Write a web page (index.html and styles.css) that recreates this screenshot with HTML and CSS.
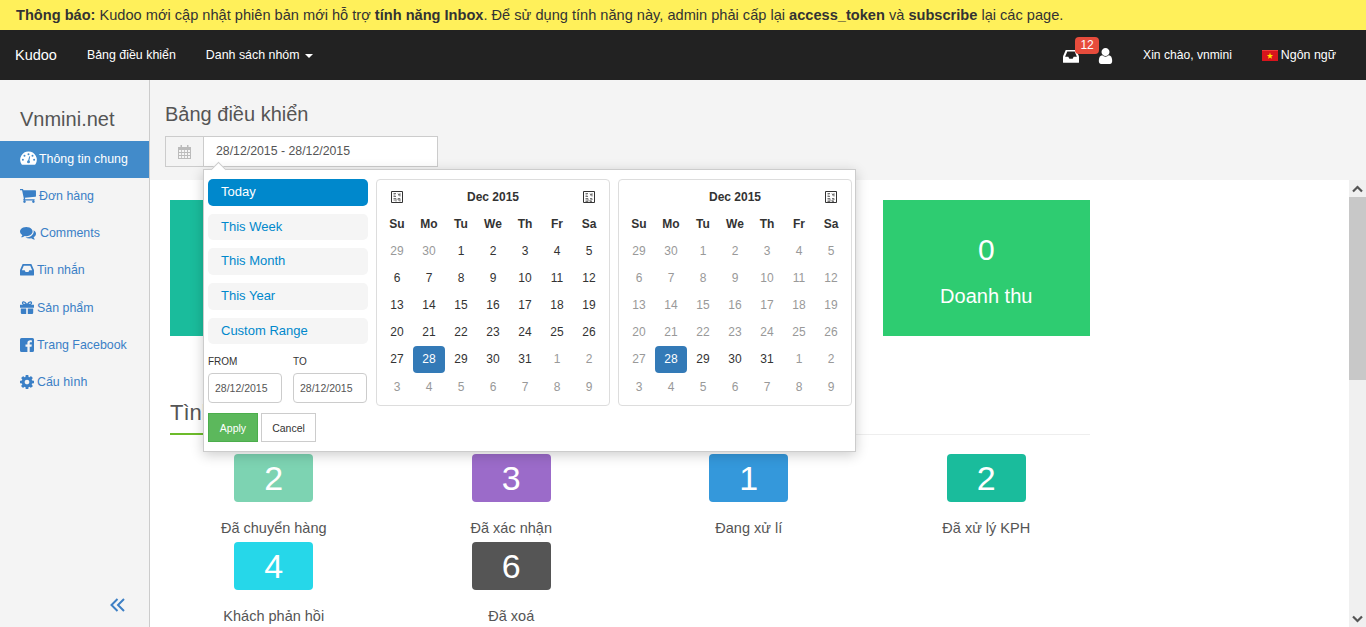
FILE: index.html
```html
<!DOCTYPE html>
<html lang="vi">
<head>
<meta charset="utf-8">
<title>Kudoo</title>
<link rel="stylesheet" href="styles.css">
</head>
<body>
<div class="notice"><b>Thông báo:</b> Kudoo mới cập nhật phiên bản mới hỗ trợ <b>tính năng Inbox</b>. Để sử dụng tính năng này, admin phải cấp lại <b>access_token</b> và <b>subscribe</b> lại các page.</div>
<nav class="nav">
  <a class="brand">Kudoo</a>
  <a class="nav-link">Bảng điều khiển</a>
  <a class="nav-link">Danh sách nhóm <i class="caret"></i></a>
  <div class="nav-right">
    <span class="nav-icons">
      <svg class="ic-inbox" viewBox="0 320 1536 1216"><path fill="#fff" d="M1023 960h316q-1-3-2.500-8.500t-2.500-7.500l-212-496h-708l-212 496q-1 3-2.500 8.500t-2.500 7.500h316l95 192h320zm513 30v482q0 26-19 45t-45 19h-1408q-26 0-45-19t-19-45v-482q0-62 25-123l238-552q10-25 36.500-42t52.500-17h832q26 0 52.500 17t36.500 42l238 552q25 61 25 123z"/></svg>
      <span class="badge">12</span>
      <svg class="ic-user" viewBox="256 128 1280 1536"><path fill="#fff" d="M1536 1399q0 109-62.500 187t-150.500 78h-854q-88 0-150.500-78t-62.500-187q0-85 8.500-160.500t31.500-152 58.500-131 94-89 134.500-34.500q131 128 313 128t313-128q76 0 134.500 34.500t94 89 58.500 131 31.500 152 8.500 160.500zm-256-887q0 159-112.500 271.500t-271.500 112.500-271.500-112.500-112.500-271.500 112.500-271.500 271.500-112.500 271.500 112.500 112.500 271.500z"/></svg>
    </span>
    <a class="nav-link hello">Xin chào, vnmini</a>
    <a class="nav-link lang">
      <svg class="flag" viewBox="0 0 16 11"><rect width="16" height="11" fill="#d8141c"/><rect width="16" height="1" fill="#ee3a3a"/><polygon fill="#ffe200" points="8,2.600 8.800,5 11.200,5 9.300,6.400 10,8.800 8,7.400 6,8.800 6.700,6.400 4.800,5 7.200,5"/></svg>
      Ngôn ngữ
    </a>
  </div>
</nav>
<div class="layout">
  <aside class="sidebar">
    <h2 class="site">Vnmini.net</h2>
    <ul class="menu">
      <li class="active"><svg class="mi mi-dial" width="17" height="15" viewBox="0 0 17 15"><path fill="#fff" d="M8.500 0.500a8.300 8.300 0 0 0-7 12.700 1 1 0 0 0 .8.500h12.400a1 1 0 0 0 .8-.5 8.300 8.300 0 0 0-7-12.700z"/><g fill="#428bca"><circle cx="8.500" cy="3.200" r="1"/><circle cx="4.500" cy="4.800" r="1"/><circle cx="12.500" cy="4.800" r="1"/><circle cx="2.900" cy="8.700" r="1"/><circle cx="14.100" cy="8.700" r="1"/><circle cx="8.500" cy="10.800" r="1.500"/><path d="M7.900 10.500 9.300 5.200l.9.200-1.100 5.400z"/></g></svg>Thông tin chung</li>
      <li><svg class="mi" width="16" height="14" viewBox="128 256 1600 1408"><path d="M704 1536q0 52-38 90t-90 38-90-38-38-90 38-90 90-38 90 38 38 90zm896 0q0 52-38 90t-90 38-90-38-38-90 38-90 90-38 90 38 38 90zm128-1088v512q0 24-16.500 42.500t-40.500 21.500l-1044 122q13 60 13 70 0 16-24 64h920q26 0 45 19t19 45-19 45-45 19h-1024q-26 0-45-19t-19-45q0-11 8-31.500t16-36 21.500-40 15.500-29.500l-177-823h-204q-26 0-45-19t-19-45 19-45 45-19h256q16 0 28.500 6.500t19.500 15.500 13 24.500 8 26 5.500 29.500 4.500 26h1201q26 0 45 19t19 45z"/></svg>Đơn hàng</li>
      <li><svg class="mi mi-wide" width="16" height="14" viewBox="0 192 1792 1472"><path d="M1408 768q0 139-94 257t-256.500 186.500-353.500 68.500q-86 0-176-16-124 88-278 128-36 9-86 16h-3q-11 0-20.500-8t-11.500-21q-1-3-1-6.500t.5-6.500 2-6l2.500-5 3.500-5.500 4-5 4.500-5 4-4.500q5-6 23-25t26-29.500 22.500-29 25-38.500 20.500-44q-124-72-195-177t-71-224q0-139 94-257t256.500-186.500 353.500-68.500 353.500 68.500 256.500 186.500 94 257zm384 256q0 120-71 224.500t-195 176.500q10 24 20.500 44t25 38.500 22.500 29 26 29.500 23 25q1 1 4 4.500t4.500 5 4 5 3.500 5.500l2.500 5 2 6 .5 6.500-1 6.500q-3 14-13 22t-22 7q-50-7-86-16-154-40-278-128-90 16-176 16-271 0-472-132 58 4 88 4 161 0 309-45t264-129q125-92 192-212t67-254q0-77-23-152 129 71 204 178t75 230z"/></svg>Comments</li>
      <li><svg class="mi mi-narrow" width="14" height="12" viewBox="0 320 1536 1216"><path d="M1023 960h316q-1-3-2.500-8.500t-2.500-7.500l-212-496h-708l-212 496q-1 3-2.500 8.500t-2.500 7.500h316l95 192h320zm513 30v482q0 26-19 45t-45 19h-1408q-26 0-45-19t-19-45v-482q0-62 25-123l238-552q10-25 36.500-42t52.500-17h832q26 0 52.500 17t36.500 42l238 552q25 61 25 123z"/></svg>Tin nhắn</li>
      <li><svg class="mi mi-narrow" width="14" height="13" viewBox="0 0 14 13"><path d="M0 3.800h14v3H0zM.8 7.500h5.400V13H2a1.200 1.200 0 0 1-1.200-1.200zM7.800 7.500h5.400v4.300A1.200 1.200 0 0 1 12 13H7.800z"/><path fill="none" stroke="currentColor" stroke-width="1.300" d="M6.600 3.400C5.600 1.400 4.300.7 3.300.9 2.200 1.100 2.200 3 3.500 3.400zM7.400 3.400C8.400 1.400 9.700.7 10.700.9c1.100.2 1.100 2.100-.2 2.500z"/></svg>Sản phẩm</li>
      <li><svg class="mi mi-narrow" width="14" height="14" viewBox="0 0 14 14"><path d="M1.500 0h11A1.500 1.500 0 0 1 14 1.500v11a1.500 1.500 0 0 1-1.500 1.500H9.700V8.700h1.800l.3-2.100H9.700V5.300c0-.6.200-1 1-1h1.200V2.400c-.2 0-.9-.1-1.700-.1-1.700 0-2.800 1-2.800 2.800v1.500H5.500v2.100h1.900V14H1.500A1.500 1.500 0 0 1 0 12.500v-11A1.500 1.500 0 0 1 1.500 0z"/></svg>Trang Facebook</li>
      <li><svg class="mi mi-narrow" width="14" height="14" viewBox="128 128 1536 1536"><path d="M1152 896q0-106-75-181t-181-75-181 75-75 181 75 181 181 75 181-75 75-181zm512-109v222q0 12-8 23t-20 13l-185 28q-19 54-39 91 35 50 107 138 10 12 10 25t-9 23q-27 37-99 108t-94 71q-12 0-26-9l-138-108q-44 23-91 38-16 136-29 186-7 28-36 28h-222q-14 0-24.500-8.500t-11.500-21.500l-28-184q-49-16-90-37l-141 107q-10 9-25 9-14 0-25-11-126-114-165-168-7-10-7-23 0-12 8-23 15-21 51-66.500t54-70.500q-27-50-41-99l-183-27q-13-2-21-12.500t-8-23.500v-222q0-12 8-23t19-13l186-28q14-46 39-92-40-57-107-138-10-12-10-24 0-10 9-23 26-36 98.500-107.500t94.500-71.500q13 0 26 10l138 107q44-23 91-38 16-136 29-186 7-28 36-28h222q14 0 24.500 8.500t11.500 21.500l28 184q49 16 90 37l142-107q9-9 24-9 13 0 25 10 129 119 165 170 7 8 7 22 0 12-8 23-15 21-51 66.500t-54 70.500q26 50 41 98l183 28q13 2 21 12.500t8 23.500z"/></svg>Cấu hình</li>
    </ul>
    <div class="collapse"><svg width="16" height="14" viewBox="0 0 16 14"><path fill="none" stroke="#3d7fc4" stroke-width="2" d="M7.500 1 1.500 7l6 6M14 1 8 7l6 6"/></svg></div>
  </aside>
  <main class="main">
    <header class="page-head">
      <h1 class="page-title">Bảng điều khiển</h1>
      <div class="range">
        <span class="range-icon"><svg width="13" height="14" viewBox="0 0 13 14"><path fill="#bbb" d="M0 2h13v12H0z"/><path fill="#f4f4f4" d="M1 5h2.200v2H1zM4 5h2.200v2H4zM7 5h2v2H7zM10 5h2v2h-2zM1 8h2.200v2H1zM4 8h2.200v2H4zM7 8h2v2H7zM10 8h2v2h-2zM1 11h2.200v2H1zM4 11h2.200v2H4zM7 11h2v2H7zM10 11h2v2h-2z"/><path fill="#bbb" d="M2.500 0h1.500v3.500H2.500zM9 0h1.500v3.500H9z"/></svg></span>
        <span class="range-value">28/12/2015 - 28/12/2015</span>
        <div class="picker">
          <div class="ranges">
            <a class="rng on">Today</a>
            <a class="rng">This Week</a>
            <a class="rng">This Month</a>
            <a class="rng">This Year</a>
            <a class="rng">Custom Range</a>
            <div class="fields">
              <label class="field"><span>FROM</span><input class="fld" value="28/12/2015"></label>
              <label class="field"><span>TO</span><input class="fld" value="28/12/2015"></label>
            </div>
            <div class="btns"><button class="btn apply">Apply</button><button class="btn cancel">Cancel</button></div>
          </div>
          <div class="cal">
            <span class="nav-tofu"><svg width="12" height="12" viewBox="0 0 12 12"><path fill="none" stroke="#333" d="M.5.500h11v11H.5z"/><path fill="none" stroke="#777" d="M2.500 2.500h2.500M2.500 4h2M2.500 5.500h2.500M7 2.500l1 2 1-2v3M2.500 7.500h2.500v3M2.500 9h2M7 7.500h2v3M7 7.500v1.500h2"/></svg></span><span class="month">Dec 2015</span><span class="nav-tofu"><svg width="12" height="12" viewBox="0 0 12 12"><path fill="none" stroke="#333" d="M.5.500h11v11H.5z"/><path fill="none" stroke="#777" d="M2.500 2.500h2.500M2.500 4h2M2.500 5.500h2.500M7 2.500l1 2 1-2v3M2.500 7.500h2.500v3H2.500M2.500 9h2M7 7.500h2v1.500H7v1.500h2"/></svg></span>
            <b>Su</b><b>Mo</b><b>Tu</b><b>We</b><b>Th</b><b>Fr</b><b>Sa</b>
            <i class="off">29</i><i class="off">30</i><i>1</i><i>2</i><i>3</i><i>4</i><i>5</i>
            <i>6</i><i>7</i><i>8</i><i>9</i><i>10</i><i>11</i><i>12</i>
            <i>13</i><i>14</i><i>15</i><i>16</i><i>17</i><i>18</i><i>19</i>
            <i>20</i><i>21</i><i>22</i><i>23</i><i>24</i><i>25</i><i>26</i>
            <i>27</i><i class="sel">28</i><i>29</i><i>30</i><i>31</i><i class="off">1</i><i class="off">2</i>
            <i class="off">3</i><i class="off">4</i><i class="off">5</i><i class="off">6</i><i class="off">7</i><i class="off">8</i><i class="off">9</i>
          </div>
          <div class="cal">
            <span class="nav-blank"></span><span class="month">Dec 2015</span><span class="nav-tofu"><svg width="12" height="12" viewBox="0 0 12 12"><path fill="none" stroke="#333" d="M.5.500h11v11H.5z"/><path fill="none" stroke="#777" d="M2.500 2.500h2.500M2.500 4h2M2.500 5.500h2.500M7 2.500l1 2 1-2v3M2.500 7.500h2.500v3H2.500M2.500 9h2M7 7.500h2v1.500H7v1.500h2"/></svg></span>
            <b>Su</b><b>Mo</b><b>Tu</b><b>We</b><b>Th</b><b>Fr</b><b>Sa</b>
            <i class="off">29</i><i class="off">30</i><i class="off">1</i><i class="off">2</i><i class="off">3</i><i class="off">4</i><i class="off">5</i>
            <i class="off">6</i><i class="off">7</i><i class="off">8</i><i class="off">9</i><i class="off">10</i><i class="off">11</i><i class="off">12</i>
            <i class="off">13</i><i class="off">14</i><i class="off">15</i><i class="off">16</i><i class="off">17</i><i class="off">18</i><i class="off">19</i>
            <i class="off">20</i><i class="off">21</i><i class="off">22</i><i class="off">23</i><i class="off">24</i><i class="off">25</i><i class="off">26</i>
            <i class="off">27</i><i class="sel">28</i><i>29</i><i>30</i><i>31</i><i class="off">1</i><i class="off">2</i>
            <i class="off">3</i><i class="off">4</i><i class="off">5</i><i class="off">6</i><i class="off">7</i><i class="off">8</i><i class="off">9</i>
          </div>
        </div>
      </div>
    </header>
    <div class="body-wrap">
      <div class="content">
        <div class="stats">
          <div class="stat-col"><div class="stat teal"></div></div>
          <div class="stat-col"><div class="stat blue"></div></div>
          <div class="stat-col"><div class="stat purple"></div></div>
          <div class="stat-col"><div class="stat green"><strong>0</strong><span>Doanh thu</span></div></div>
        </div>
        <h3 class="section"><span>Tình</span></h3>
        <div class="tiles">
          <div class="tile-col"><div class="tile c1">2</div><p>Đã chuyển hàng</p></div>
          <div class="tile-col"><div class="tile c2">3</div><p>Đã xác nhận</p></div>
          <div class="tile-col"><div class="tile c3">1</div><p>Đang xử lí</p></div>
          <div class="tile-col"><div class="tile c4">2</div><p>Đã xử lý KPH</p></div>
          <div class="tile-col"><div class="tile c5">4</div><p>Khách phản hồi</p></div>
          <div class="tile-col"><div class="tile c6">6</div><p>Đã xoá</p></div>
        </div>
      </div>
      <div class="scrollbar">
        <span class="sb-btn"><svg width="11" height="8" viewBox="0 0 11 8"><path fill="none" stroke="#555" stroke-width="2.200" d="M1 6.500 5.500 2 10 6.500"/></svg></span>
        <span class="sb-thumb"></span>
        <span class="sb-track"></span>
        <span class="sb-btn"><svg width="11" height="8" viewBox="0 0 11 8"><path fill="none" stroke="#555" stroke-width="2.200" d="M1 1.500 5.500 6 10 1.500"/></svg></span>
      </div>
    </div>
  </main>
</div>
</body>
</html>
```
FILE: styles.css
```css
* { box-sizing: border-box; }
html, body { height: 100%; }
body {
  margin: 0;
  height: 627px;
  overflow: hidden;
  display: flex;
  flex-direction: column;
  font-family: "Liberation Sans", Arial, sans-serif;
  font-size: 14px;
  color: #333;
  background: #fff;
}
.notice {
  height: 30px;
  line-height: 30px;
  padding-left: 16px;
  background: #fff05a;
  color: #333;
  font-size: 14.600px;
  white-space: nowrap;
}
.nav {
  height: 50px;
  display: flex;
  align-items: center;
  background: #222;
  color: #fff;
  padding-left: 15px;
}
.brand { font-size: 14.500px; margin-right: 30px; }
.nav-link { font-size: 12.400px; margin-right: 30px; white-space: nowrap; }
.hello { font-size: 12.100px; }
.caret {
  display: inline-block;
  vertical-align: middle;
  margin-left: 2px;
  border-top: 4px solid #fff;
  border-left: 4px solid transparent;
  border-right: 4px solid transparent;
}
.nav-right { margin-left: auto; display: flex; align-items: center; }
.nav-icons { position: relative; display: flex; align-items: center; width: 80px; padding-top: 2px; }
.ic-inbox { width: 16px; height: 13px; }
.ic-user { width: 15px; height: 16px; margin-left: 19px; }
.badge {
  position: absolute;
  left: 12px;
  top: -9px;
  width: 24px;
  height: 17px;
  border-radius: 4px;
  background: #e74c3c;
  color: #fff;
  font-size: 12px;
  line-height: 17px;
  text-align: center;
}
.lang { display: flex; align-items: center; gap: 3px; }
.flag { width: 16px; height: 11px; }
.layout { flex: 1; display: flex; min-height: 0; }
.sidebar {
  width: 150px;
  position: relative;
  background: #f4f4f4;
  border-right: 1px solid #ccc;
  flex: none;
}
.site {
  margin: 27px 0 0;
  padding-left: 20px;
  height: 34px;
  line-height: 24px;
  font-size: 20px;
  font-weight: 400;
  color: #555;
}
.menu { list-style: none; margin: 0; padding: 0; }
.menu li {
  height: 37.200px;
  display: flex;
  align-items: center;
  padding: 0 0 1.400px 20px;
  font-size: 12.400px;
  color: #3a7fc6;
  white-space: nowrap;
}
.menu .active { background: #428bca; color: #fff; }
.mi { fill: currentColor; flex: none; margin-right: 3px; }
.mi-dial { margin-right: 2px; }
.mi-wide { margin-right: 4px; }
.collapse { position: absolute; left: 110px; top: 518px; line-height: 0; }
.main { flex: 1; min-width: 0; display: flex; flex-direction: column; }
.page-head { height: 100px; padding: 22px 0 0 15px; background: #f4f4f4; flex: none; }
.page-title { margin: 0 0 10px; height: 24px; line-height: 24px; font-size: 20px; font-weight: 400; color: #555; }
.range {
  position: relative;
  width: 273px;
  height: 31px;
  display: flex;
  background: #fff;
  border: 1px solid #ccc;
  font-size: 12.300px;
}
.range-icon {
  width: 38px;
  display: flex;
  align-items: center;
  justify-content: center;
  background: #f4f4f4;
  border-right: 1px solid #ccc;
  margin-left: 0;
}
.range-value { padding-left: 12px; line-height: 28px; color: #555; }
.picker {
  position: absolute;
  left: 37px;
  top: 32px;
  width: 653px;
  height: 283px;
  z-index: 5;
  display: flex;
  gap: 8px;
  padding: 9px 4px 0 4px;
  background: #fff;
  border: 1px solid #ccc;
  box-shadow: 0 3px 12px rgba(0, 0, 0, .2);
}
.picker::before {
  content: "";
  position: absolute;
  left: 9px;
  top: -6px;
  width: 10px;
  height: 10px;
  background: #fff;
  border-left: 1px solid #ccc;
  border-top: 1px solid #ccc;
  transform: rotate(45deg);
}
.ranges { width: 160px; flex: none; position: relative; }
.rng {
  display: block;
  height: 26.700px;
  line-height: 26px;
  margin-bottom: 8px;
  padding-left: 13px;
  border-radius: 5px;
  background: #f5f5f5;
  color: #08c;
  font-size: 13px;
}
.rng.on { background: #08c; color: #fff; }
.fields { display: flex; gap: 11px; }
.field { display: flex; flex-direction: column; width: 74px; font-size: 10px; color: #333; }
.field span { height: 21px; line-height: 20px; }
.fld {
  width: 74px;
  height: 30px;
  padding: 0 6px;
  border: 1px solid #ccc;
  border-radius: 4px;
  font: 10.500px "Liberation Sans", Arial, sans-serif;
  color: #555;
  outline: 0;
  background: #fff;
}
.btns { display: flex; gap: 3px; margin-top: 10px; position: relative; }
.btn { height: 29px; padding: 0; font: 10.500px "Liberation Sans", Arial, sans-serif; }
.apply { width: 50px; background: #5cb85c; border: 1px solid #4cae4c; color: #fff; }
.cancel { width: 55px; background: #fff; border: 1px solid #ccc; color: #333; }
.cal {
  width: 234px;
  height: 227px;
  flex: none;
  display: grid;
  grid-template-columns: repeat(7, 32px);
  grid-auto-rows: 27.150px;
  padding: 3px 4px 4px;
  border: 1px solid #ddd;
  border-radius: 4px;
  font-size: 12px;
  text-align: center;
}
.cal b, .cal i { display: flex; align-items: center; justify-content: center; font-style: normal; }
.cal b { color: #333; }
.cal i { color: #333; }
.cal .off { color: #999; }
.cal .sel { background: #337ab7; color: #fff; border-radius: 4px; }
.month { grid-column: span 5; display: flex; align-items: center; justify-content: center; font-weight: 700; color: #333; }
.nav-tofu, .nav-blank { display: flex; align-items: center; justify-content: center; }
.body-wrap { flex: 1; min-height: 0; display: flex; }
.content { flex: 1; min-width: 0; padding: 20px 0 0 20px; overflow: hidden; }
.stats { display: flex; width: 950px; margin-left: -15px; }
.stat-col { width: 237.500px; padding: 0 15px; }
.stat {
  height: 136px;
  display: flex;
  flex-direction: column;
  align-items: center;
  color: #fff;
  padding-top: 33px;
}
.stat strong { font-weight: 400; font-size: 30px; line-height: 34px; }
.stat span { font-size: 20px; line-height: 24px; margin-top: 17px; }
.teal { background: #1abc9c; }
.blue { background: #3498db; }
.purple { background: #9b59b6; }
.green { background: #2ecc71; }
.section {
  margin: 60px 0 0;
  width: 920px;
  height: 39px;
  font-size: 22px;
  font-weight: 400;
  color: #555;
  line-height: 34px;
  border-bottom: 1px solid #eee;
}
.section span { display: inline-block; height: 39px; padding-right: 20px; border-bottom: 2px solid #6cbb2a; }
.tiles { display: grid; grid-template-columns: repeat(4, 237.500px); grid-auto-rows: 88px; width: 950px; margin: 19px 0 0 -15px; }
.tile-col { display: flex; flex-direction: column; align-items: center; }
.tile {
  width: 79px;
  height: 48px;
  line-height: 48px;
  border-radius: 4px;
  color: #fff;
  font-size: 34px;
  text-align: center;
}
.c1 { background: #7dd3b2; }
.c2 { background: #9b6bc9; }
.c3 { background: #3498db; }
.c4 { background: #1abc9c; }
.c5 { background: #26d7e9; }
.c6 { background: #555; }
.tile-col p { margin: 16px 0 0; font-size: 14.500px; line-height: 20px; color: #555; white-space: nowrap; }
.scrollbar { width: 17px; flex: none; display: flex; flex-direction: column; background: #f0f0f0; }
.sb-btn { height: 17px; flex: none; display: flex; align-items: center; justify-content: center; }
.sb-thumb { height: 183px; flex: none; background: #c8c8c8; }
.sb-track { flex: 1; }
```
